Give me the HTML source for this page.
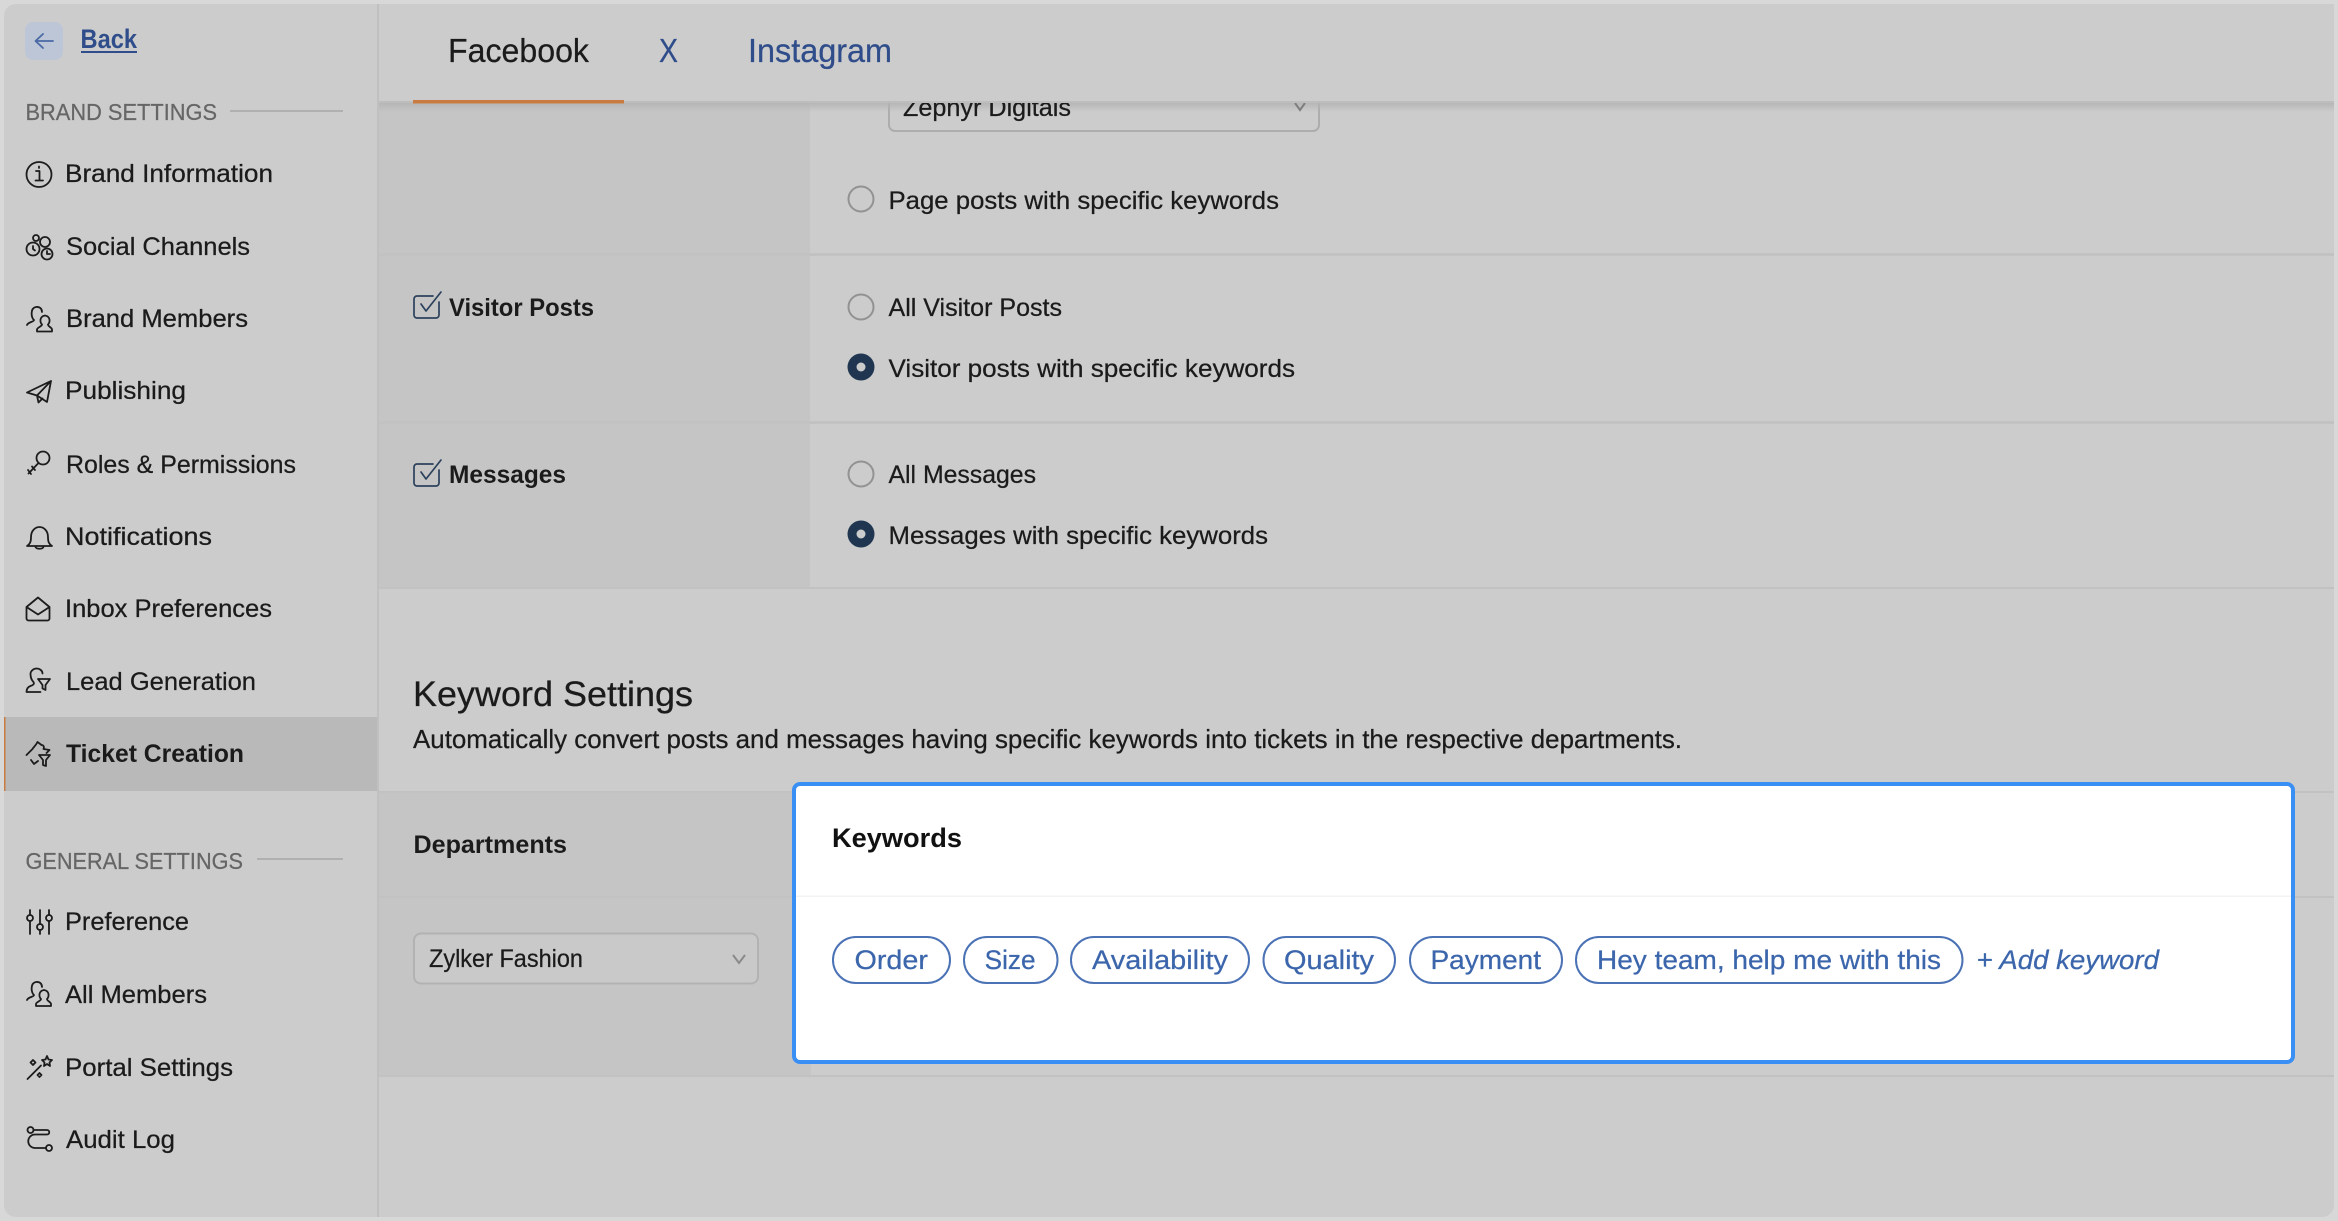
<!DOCTYPE html>
<html lang="en">
<head>
<meta charset="utf-8">
<title>Ticket Creation</title>
<style>
html,body{margin:0;padding:0;background:#d8d8d8;width:2338px;height:1221px;overflow:hidden}
svg{display:block}
text{font-family:"Liberation Sans",sans-serif;fill:#1b1b1b;font-size:25px;stroke:#1b1b1b;stroke-width:.25px}
.n{font-size:25px}
.h{font-size:23px;fill:#666;stroke:#666}
.b{font-weight:bold;stroke-width:0}
.tab{font-size:33px}
.blue{fill:#2f4d8a;stroke:#2f4d8a}
.pill{fill:#3c66ac;stroke:#3c66ac;font-size:27px}
.ic{fill:none;stroke:#1c1c1c;stroke-width:1.8;stroke-linecap:round;stroke-linejoin:round}
.pl{fill:#fff;stroke:#4a72b5;stroke-width:2}
.rd{fill:none;stroke:#929292;stroke-width:2}
.ck{fill:none;stroke:#2c415c;stroke-width:1.7;stroke-linecap:round;stroke-linejoin:round}
</style>
</head>
<body>
<svg width="2338" height="1221" viewBox="0 0 2338 1221" xmlns="http://www.w3.org/2000/svg">
<defs>
<linearGradient id="sh" x1="0" y1="0" x2="0" y2="1"><stop offset="0" stop-color="#b4b4b4"/><stop offset="1" stop-color="#b4b4b4" stop-opacity="0"/></linearGradient>
</defs>
<rect x="0" y="0" width="2338" height="1221" rx="14" fill="#d8d8d8"/>
<rect x="4" y="4" width="2330" height="1213" rx="12" fill="#cccccc"/>

<!-- content cells -->
<rect x="379" y="102" width="431" height="152" fill="#c5c5c5"/>
<rect x="379" y="256" width="431" height="165" fill="#c5c5c5"/>
<rect x="379" y="423" width="431" height="165" fill="#c5c5c5"/>
<rect x="379" y="792" width="432" height="284" fill="#c5c5c5"/>
<rect x="379" y="253" width="1955" height="3" fill="#c2c2c2"/>
<rect x="379" y="421" width="1955" height="3" fill="#c2c2c2"/>
<rect x="379" y="587" width="1955" height="2" fill="#c2c2c2"/>
<rect x="379" y="791" width="1955" height="2" fill="#c2c2c2"/>
<rect x="379" y="896" width="1955" height="2" fill="#c2c2c2"/>
<rect x="379" y="1075" width="1955" height="2" fill="#c2c2c2"/>

<!-- zephyr select frame -->
<rect x="889" y="70" width="430" height="61" rx="6" fill="#cccccc" stroke="#adadad" stroke-width="2"/>

<!-- tab bar -->
<rect x="379" y="102" width="1955" height="10" fill="url(#sh)"/>
<text x="903" y="116" textLength="168" lengthAdjust="spacingAndGlyphs">Zephyr Digitals</text>
<path d="M1295 103l5 7 5-7" fill="none" stroke="#7e7e7e" stroke-width="2"/>
<rect x="379" y="4" width="1955" height="98" fill="#cccccc"/>
<rect x="379" y="101" width="1955" height="2" fill="#bdbdbd"/>
<rect x="413" y="100" width="211" height="3.5" fill="#c97c42"/>
<text class="tab" x="448" y="62" textLength="141" lengthAdjust="spacingAndGlyphs">Facebook</text>
<text class="tab blue" x="659" y="62" textLength="19" lengthAdjust="spacingAndGlyphs">X</text>
<text class="tab blue" x="748" y="62" textLength="144" lengthAdjust="spacingAndGlyphs">Instagram</text>

<!-- rows -->
<circle class="rd" cx="861" cy="199" r="12.5"/>
<text x="888.500" y="209" textLength="390.500" lengthAdjust="spacingAndGlyphs">Page posts with specific keywords</text>

<path class="ck" d="M433 296H417a3 3 0 0 0-3 3V315a3 3 0 0 0 3 3H436a3 3 0 0 0 3-3V302"/>
<path class="ck" d="M421 304L426 311L441 292"/>
<text class="b" x="449" y="316" textLength="145" lengthAdjust="spacingAndGlyphs">Visitor Posts</text>
<circle class="rd" cx="861" cy="307" r="12.5"/>
<text x="888.500" y="316" textLength="173.500" lengthAdjust="spacingAndGlyphs">All Visitor Posts</text>
<circle cx="861" cy="367" r="13.5" fill="#1f3550"/><circle cx="861" cy="367" r="4.5" fill="#cccccc"/>
<text x="888.500" y="377" textLength="406.500" lengthAdjust="spacingAndGlyphs">Visitor posts with specific keywords</text>

<path class="ck" d="M433 464H417a3 3 0 0 0-3 3V483a3 3 0 0 0 3 3H436a3 3 0 0 0 3-3V470"/>
<path class="ck" d="M421 472L426 479L441 460"/>
<text class="b" x="449" y="483" textLength="117" lengthAdjust="spacingAndGlyphs">Messages</text>
<circle class="rd" cx="861" cy="474" r="12.5"/>
<text x="888.500" y="483" textLength="147.500" lengthAdjust="spacingAndGlyphs">All Messages</text>
<circle cx="861" cy="534" r="13.5" fill="#1f3550"/><circle cx="861" cy="534" r="4.5" fill="#cccccc"/>
<text x="888.500" y="544" textLength="379.500" lengthAdjust="spacingAndGlyphs">Messages with specific keywords</text>

<!-- keyword settings -->
<text x="413" y="706" style="font-size:35px" textLength="280" lengthAdjust="spacingAndGlyphs">Keyword Settings</text>
<text x="413" y="748" style="font-size:26px" textLength="1269" lengthAdjust="spacingAndGlyphs">Automatically convert posts and messages having specific keywords into tickets in the respective departments.</text>

<text class="b" x="413.500" y="853" textLength="153.500" lengthAdjust="spacingAndGlyphs">Departments</text>
<rect x="414" y="933.5" width="344" height="50" rx="7" fill="#c9c9c9" stroke="#b2b2b2" stroke-width="2"/>
<text x="429" y="967" textLength="154" lengthAdjust="spacingAndGlyphs">Zylker Fashion</text>
<path d="M733 955l6 8 6-8" fill="none" stroke="#8a8a8a" stroke-width="2"/>

<!-- keywords card -->
<rect x="794" y="784" width="1499" height="278" rx="6" fill="#ffffff" stroke="#3a8ff5" stroke-width="4"/>
<rect x="796" y="895.5" width="1495" height="1.5" fill="#f3f3f3"/>
<text class="b" x="832" y="847" style="font-size:27px;fill:#111" textLength="130" lengthAdjust="spacingAndGlyphs">Keywords</text>

<rect class="pl" x="833" y="937" width="117" height="46" rx="23"/>
<text class="pill" x="854.5" y="969" textLength="73.5" lengthAdjust="spacingAndGlyphs">Order</text>
<rect class="pl" x="964" y="937" width="93.5" height="46" rx="23"/>
<text class="pill" x="984.6" y="969" textLength="51" lengthAdjust="spacingAndGlyphs">Size</text>
<rect class="pl" x="1071" y="937" width="178" height="46" rx="23"/>
<text class="pill" x="1092" y="969" textLength="136" lengthAdjust="spacingAndGlyphs">Availability</text>
<rect class="pl" x="1263.500" y="937" width="131.500" height="46" rx="23"/>
<text class="pill" x="1284" y="969" textLength="90" lengthAdjust="spacingAndGlyphs">Quality</text>
<rect class="pl" x="1410" y="937" width="152" height="46" rx="23"/>
<text class="pill" x="1430.5" y="969" textLength="110.5" lengthAdjust="spacingAndGlyphs">Payment</text>
<rect class="pl" x="1576" y="937" width="386.500" height="46" rx="23"/>
<text class="pill" x="1597" y="969" textLength="344" lengthAdjust="spacingAndGlyphs">Hey team, help me with this</text>
<text class="pill" x="1976.500" y="969" style="font-style:italic" textLength="182.500" lengthAdjust="spacingAndGlyphs">+ Add keyword</text>

<!-- sidebar -->
<rect x="377" y="4" width="2" height="1213" fill="#c0c0c0"/>
<rect x="4" y="717" width="373" height="74" fill="#b9b9b9"/>
<rect x="4" y="717" width="1.5" height="74" fill="#c97c42"/>

<rect x="25" y="22" width="38" height="38" rx="8" fill="#bdc6d6"/>
<path d="M53 41H36M43 34l-7.500 7 7.500 7" fill="none" stroke="#4a6aa5" stroke-width="1.800" stroke-linecap="round" stroke-linejoin="round"/>
<text class="b" x="80.500" y="48" style="font-size:27px;fill:#2f4d8a" textLength="56.500" lengthAdjust="spacingAndGlyphs">Back</text>
<rect x="81" y="51" width="56" height="2" fill="#2f4d8a"/>

<text class="h" x="25.500" y="120" textLength="191.500" lengthAdjust="spacingAndGlyphs">BRAND SETTINGS</text>
<rect x="230" y="110" width="113" height="2" fill="#b0b0b0"/>

<circle class="ic" cx="39" cy="174.500" r="12.500"/>
<path class="ic" d="M36 171h3.500v9M35.500 180.500h7.500M39 166.500v1.500"/>
<text class="n" x="65" y="182" textLength="208" lengthAdjust="spacingAndGlyphs">Brand Information</text>

<circle class="ic" cx="36" cy="238" r="3"/><circle class="ic" cx="45" cy="242" r="5"/><circle class="ic" cx="33" cy="249" r="6.500"/><circle class="ic" cx="47" cy="254" r="5.500"/>
<path class="ic" d="M33 246v3l2 1.500M47 251v3h3"/>
<text class="n" x="66" y="255" textLength="184" lengthAdjust="spacingAndGlyphs">Social Channels</text>

<path class="ic" d="M27 325c1-3 7-3 7-5-3-2-4-12 2-13 4-.5 6 2 6 5M37 331.500v-2c0-2 5-3 5-5-2-2-3-8 3-9 6 1 5 7 3 9 0 2 4 3 4 5v2z"/>
<text class="n" x="66" y="327" textLength="182" lengthAdjust="spacingAndGlyphs">Brand Members</text>

<path class="ic" d="M27 392.500L51 381l-4 21-10-6.500zM51 381L37 395.500l1.500 7 4-4"/>
<text class="n" x="65" y="399" textLength="121" lengthAdjust="spacingAndGlyphs">Publishing</text>

<circle class="ic" cx="43" cy="458" r="6.500"/>
<path class="ic" d="M38.500 463L28.500 473.500M28 470l3 4M32 466.500l3 3.500"/>
<text class="n" x="66" y="473" textLength="230" lengthAdjust="spacingAndGlyphs">Roles &amp; Permissions</text>

<path class="ic" d="M27 546c3-2 4-4 4-9 0-6 4-10 8.500-10s8.500 4 8.500 10c0 5 1 7 4 9zM35.500 546.500c0 3 8 3 8 0"/>
<text class="n" x="65" y="545" textLength="147" lengthAdjust="spacingAndGlyphs">Notifications</text>

<path class="ic" d="M26.500 607v11.500a2 2 0 0 0 2 2h19a2 2 0 0 0 2-2V607L38 597.500zM26.500 607L38 614.500 49.500 607"/>
<text class="n" x="65" y="617" textLength="207" lengthAdjust="spacingAndGlyphs">Inbox Preferences</text>

<path class="ic" d="M26.500 692h14M26.500 692c0-3 1-5 4-6s4-2 3-4c-2-2-3-5-3-8 0-3 3-5.500 6-5.500s6 2 6 5M38 679h12l-4.500 6v5l-3-1.500V685z"/>
<text class="n" x="66" y="690" textLength="190" lengthAdjust="spacingAndGlyphs">Lead Generation</text>

<path class="ic" d="M26.500 755l6-6c1-2 3-3 5-7l4 3c2 0 3 2 2 4l6 1-3 3M31 760l3 4 4-3M39 755h11l-4 5v6l-3-1v-5z"/>
<text class="b" x="66" y="762" textLength="178" lengthAdjust="spacingAndGlyphs">Ticket Creation</text>

<text class="h" x="25.500" y="869" textLength="217.500" lengthAdjust="spacingAndGlyphs">GENERAL SETTINGS</text>
<rect x="257" y="858" width="86" height="2" fill="#b0b0b0"/>

<path class="ic" d="M30 910v5M30 921v13M40 910v14M40 930v4M49 910v5M49 921v13"/>
<circle class="ic" cx="30" cy="918" r="3"/><circle class="ic" cx="40" cy="927" r="3"/><circle class="ic" cx="49" cy="918" r="3"/>
<text class="n" x="65" y="930" textLength="124" lengthAdjust="spacingAndGlyphs">Preference</text>

<path class="ic" d="M27 1000c1-3 7-3 7-5-3-2-4-12 2-13 4-.5 6 2 6 5M36 1006v-2c0-2 5-3 5-5-2-2-3-8 3-9 6 1 5 7 3 9 0 2 4 3 4 5v2z"/>
<text class="n" x="65" y="1003" textLength="142" lengthAdjust="spacingAndGlyphs">All Members</text>

<path class="ic" d="M27.500 1079L41 1065.500M47 1056l1.500 3.500 3.500 .5-2.500 2.500 .5 3.500-3-2-3 2 .5-3.500-2.500-2.500 3.500-.5zM33 1060l2.500 2.500-2.500 2.500-2.500-2.500zM39.500 1073l2 2-2 2-2-2z"/>
<text class="n" x="65" y="1076" textLength="168" lengthAdjust="spacingAndGlyphs">Portal Settings</text>

<circle class="ic" cx="30.500" cy="1130" r="3"/><circle class="ic" cx="49" cy="1148" r="3"/>
<path class="ic" d="M33.500 1130H47c3 0 3 4.500 0 4.500H35a6.500 6.500 0 0 0 0 13.500H46"/>
<text class="n" x="66" y="1148" textLength="109" lengthAdjust="spacingAndGlyphs">Audit Log</text>
</svg>
</body>
</html>
